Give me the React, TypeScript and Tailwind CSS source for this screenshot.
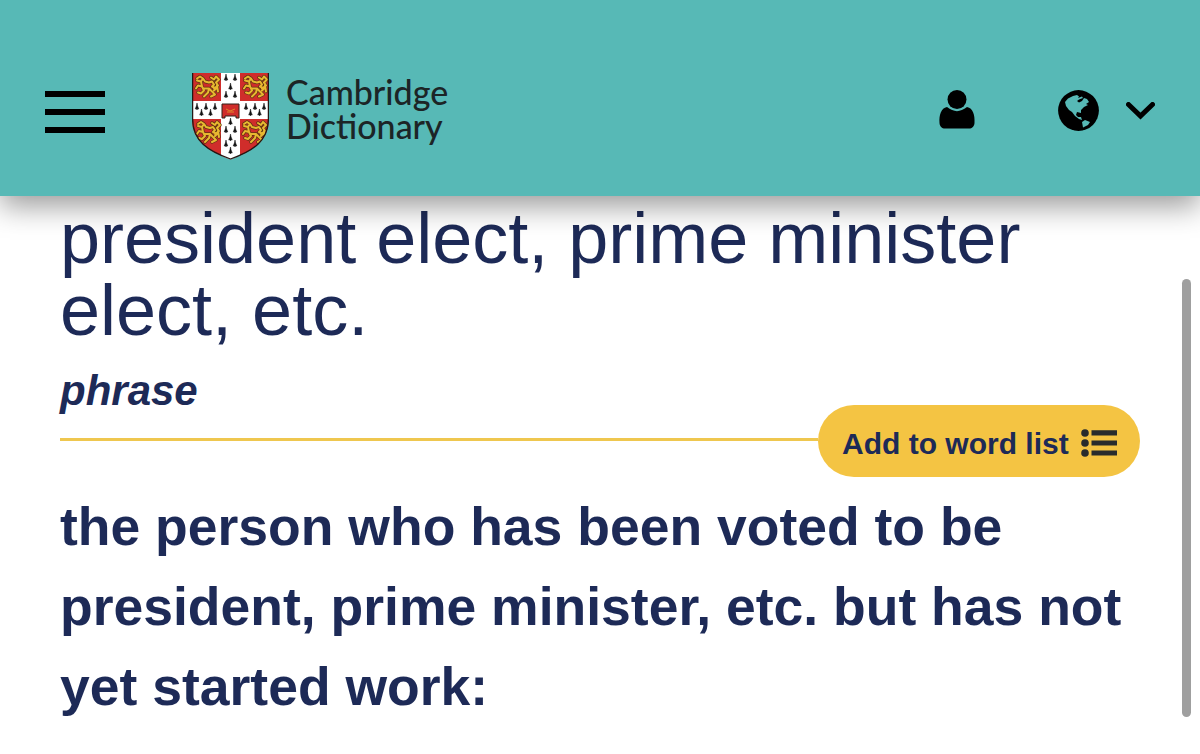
import { ReactNode } from "react";

const lion =
  "M3 4 L6 2 L9 4 L11 7 L15 8 L18 7 L20 10 L18 12 L22 14 L20 16 M9 4 L7 7 L3 6 M7 7 L8 12 L4 11 L2 14 M8 12 L10 16 L7 19 L4 18 M10 14 L15 14 L18 17 L21 20 L17 22 M15 14 L14 18 L10 22 M20 14 L24 11 L22 8 L25 5 L22 2 L20 5 L17 3 M23 11 L24 17";

function Lion({ x, y }: { x: number; y: number }) {
  return (
    <g transform={`translate(${x} ${y})`} fill="none" strokeLinejoin="round" strokeLinecap="round">
      <path d={lion} stroke="#5f3512" strokeWidth="3.4" />
      <path d={lion} stroke="#e8b730" strokeWidth="2" />
    </g>
  );
}

const spots: [number, number][] = [
  [34, 5], [43, 5], [38.5, 14], [34, 22], [43, 22],
  [5, 34], [14, 34], [23, 34], [9.5, 40], [18.5, 40],
  [54, 34], [63, 34], [72, 34], [58.5, 40], [67.5, 40],
  [38.5, 49], [34, 57], [43, 57], [38.5, 65], [34, 71], [43, 71], [38.5, 78],
];

function Shield() {
  return (
    <svg viewBox="0 0 77 87" className="h-[87px] w-[77px] shrink-0" aria-hidden="true">
      <defs>
        <clipPath id="shield">
          <path d="M0 0H77V46C77 68 61 78 38.5 86.5C16 78 0 68 0 46Z" />
        </clipPath>
      </defs>
      <g clipPath="url(#shield)">
        <path d="M0 0H77V87H0Z" fill="#d02d2b" />
        <path d="M29 0H48V28H77V46H48V87H29V46H0V28H29Z" fill="#fff" />
        <Lion x={2} y={1.5} />
        <Lion x={50} y={1.5} />
        <Lion x={3} y={47} />
        <Lion x={49} y={47} />
        {spots.map(([x, y]) => (
          <path key={`${x}-${y}`} transform={`translate(${x} ${y})`} d="M0-4L.6-1L1.8 2L.5 1.7L0 3L-.5 1.7L-1.8 2L-.6-1Z" fill="#111" stroke="#111" strokeWidth=".5" />
        ))}
        <path d="M30 31H47V45H44V43H33V45H30Z" fill="#d02d2b" stroke="#33201b" strokeWidth="1" />
        <path d="M34 36L38 38L43 36M35 39H42" stroke="#e08a2c" fill="none" />
      </g>
      <path d="M.6 0V46C.6 68 16 78 38.5 86C61 78 76.4 68 76.4 46V0" fill="none" stroke="#241714" strokeWidth="1.3" />
    </svg>
  );
}

function Globe() {
  return (
    <svg viewBox="0 0 41 41" className="size-[41px]" aria-hidden="true">
      <circle cx="20.5" cy="20.5" r="20.4" />
      <path fill="#57b9b6" d="M7 12L10 8.500L15 6L19 5L21 6.500L20 8L24 6.500L25 8L21 9.500L19 11L21 12.500L24 11L26 8L29 9L31 12L28 14L30 15L26 17L23 20L23 23L19 22L18 25L20 27L23 27L24 30L21 29L17 26L14 22L11 20L8 16Z M24 32L27 30L32 32L30 35L25 37.500Z" />
    </svg>
  );
}

function IconButton({ label, children, className }: { label: string; children: ReactNode; className: string }) {
  return (
    <button type="button" aria-label={label} className={className}>
      {children}
    </button>
  );
}

export default function App() {
  return (
    <div className="relative flex h-[754px] w-[1200px] flex-col overflow-hidden bg-white font-['Liberation_Sans',Arial,sans-serif] text-[#1d2a57]">
      <header className="relative flex h-[196px] shrink-0 items-start bg-[#57b9b6] text-black shadow-[0_10px_28px_rgba(0,0,0,0.4)]">
        <IconButton label="Menu" className="mt-[91px] ml-[45px] flex w-[60px] flex-col gap-3">
          <span className="h-1.5 w-full bg-black" />
          <span className="h-1.5 w-full bg-black" />
          <span className="h-1.5 w-full bg-black" />
        </IconButton>
        <div className="mt-[73px] ml-[87px] flex gap-[17px]">
          <Shield />
          <div className="mt-[2px] font-['Lato',sans-serif] text-[34px] leading-[34px] font-medium text-[#1c2526]">
            <div>Cambridge</div>
            <div>Dictionary</div>
          </div>
        </div>
        <div className="mr-[45px] ml-auto flex items-start">
          <IconButton label="Account" className="mt-[90px]">
            <svg viewBox="0 0 36 39" className="h-[39px] w-9" aria-hidden="true">
              <circle cx="18" cy="9.500" r="9.500" />
              <path d="M8 17C15 22.500 21 22.500 28 17C34 18 36 25 35.500 33C35.300 36.500 33 38.500 30 38.500H6C3 38.500.7 36.500.5 33C0 25 2 18 8 17Z" />
            </svg>
          </IconButton>
          <IconButton label="Language" className="mt-[90px] ml-[83px] flex">
            <Globe />
            <svg viewBox="0 0 29 18" className="mt-3 ml-[27px] h-[18px] w-[29px]" fill="none" stroke="currentColor" strokeWidth="5" aria-hidden="true">
              <path d="M2.500 2.500L14.500 14L26.500 2.500" strokeLinecap="round" />
            </svg>
          </IconButton>
        </div>
      </header>
      <main className="px-[60px] pt-[6px]">
        <h1 className="text-[72px] leading-[72px]">
          president elect, prime minister
          <br />
          elect, etc.
        </h1>
        <p className="mt-5 text-[42px] leading-[50px] font-bold italic">phrase</p>
        <div className="-mt-[11px] flex h-[72px] items-center">
          <div className="-mt-[3px] h-[3px] flex-1 bg-[#efc74f]" />
          <button type="button" className="flex h-[72px] w-[322px] items-center rounded-full bg-[#f4c443] pl-6 text-[30px] font-bold">
            <span className="mt-1 whitespace-nowrap">Add to word list</span>
            <svg viewBox="0 0 36 28" className="mt-1 ml-3 h-7 w-9 shrink-0" fill="#292c2c" aria-hidden="true">
              <circle cx="4" cy="4" r="3.800" />
              <circle cx="4" cy="14" r="3.800" />
              <circle cx="4" cy="24" r="3.800" />
              <path d="M10.500 1.200H36V6.400H10.500ZM10.500 11.500H36V16.500H10.500ZM10.500 21.500H36V26.500H10.500Z" />
            </svg>
          </button>
        </div>
        <p className="mt-[10px] text-[53.500px] leading-[80px] font-bold whitespace-nowrap">
          the person who has been voted to be
          <br />
          president, prime minister, etc. but has not
          <br />
          yet started work:
        </p>
      </main>
      <div className="absolute top-[279px] right-[9px] h-[438px] w-[9px] rounded-full bg-[#9f9f9f]" />
    </div>
  );
}
